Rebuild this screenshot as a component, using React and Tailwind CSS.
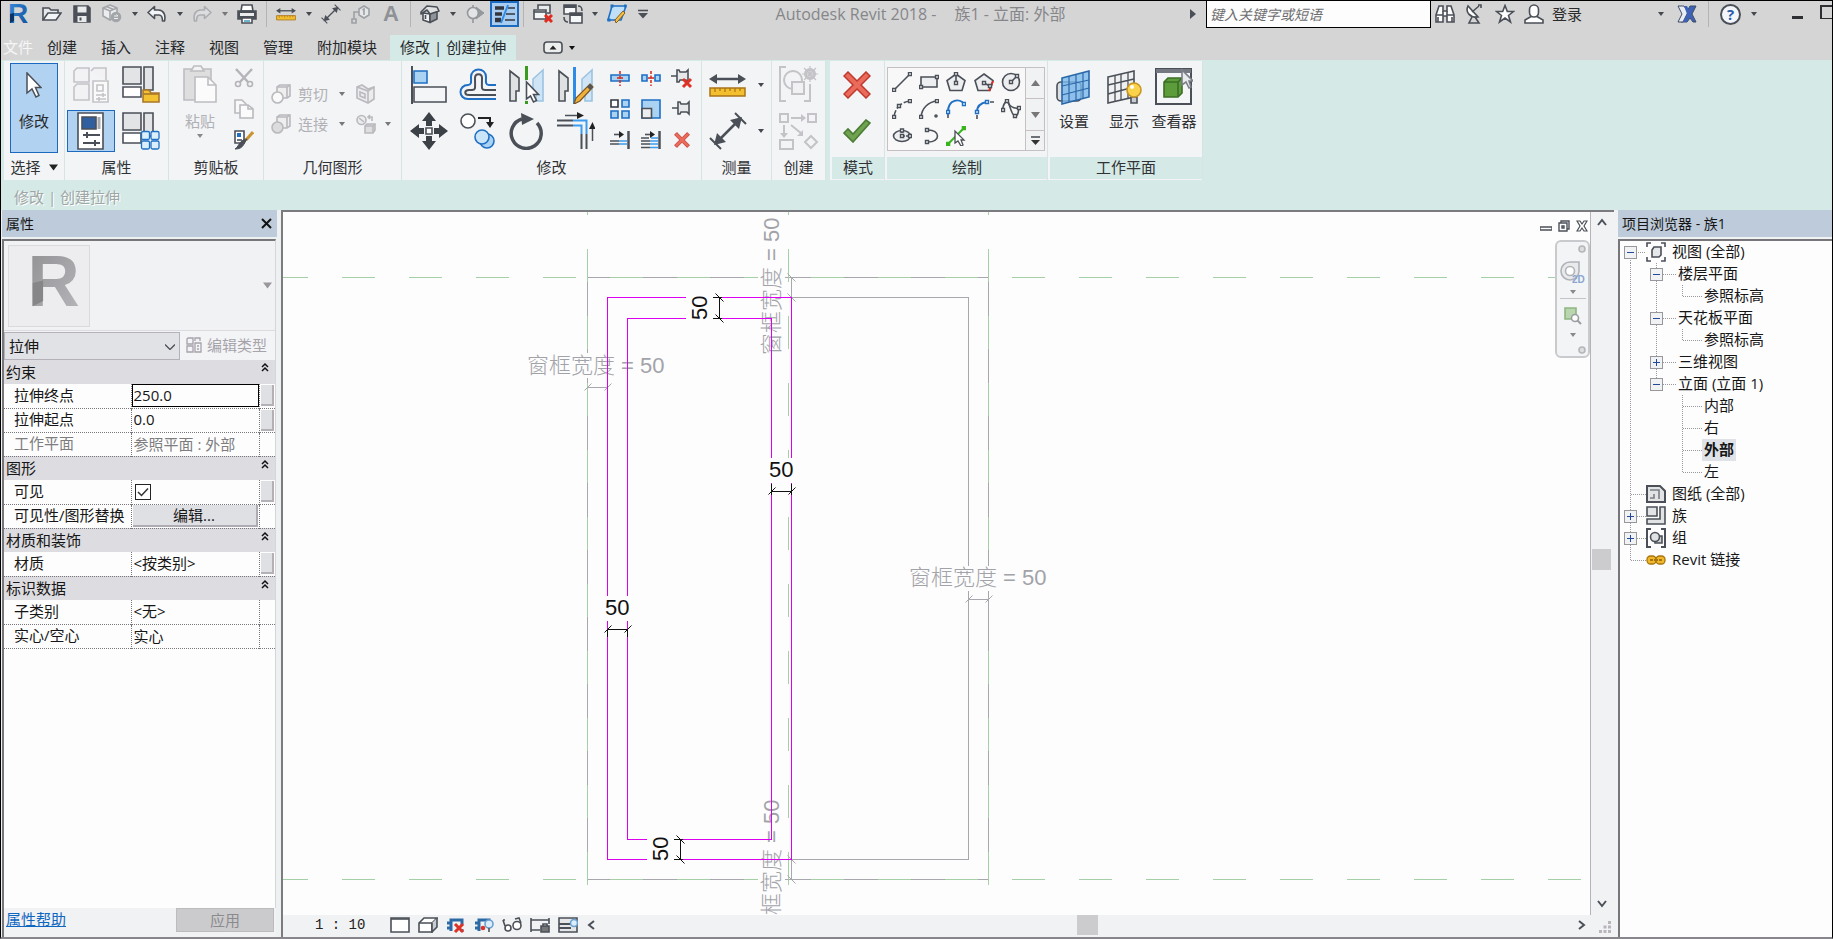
import { useState } from 'react';

const INK = '#4b5058';
const PALE = '#c3c3c8';
const BLUE = '#1f6fc4';
const SKY = '#a9d2f3';

function Svg({ w = 20, h = w, children, ...rest }) {
  return (
    <svg width={w} height={h} viewBox={`0 0 ${w} ${h}`} fill="none" stroke={INK} strokeWidth="1.6" className="block shrink-0" aria-hidden="true" {...rest}>
      {children}
    </svg>
  );
}

function Caret({ color = '#44484f', size = 6, className = '' }) {
  return (
    <svg width={size} height={size} viewBox="0 0 6 6" className={`block shrink-0 ${className}`} aria-hidden="true">
      <path d="M0 1h6L3 5z" fill={color} />
    </svg>
  );
}

function CaretButton({ label, className = 'w-[15px]', color }) {
  return (
    <button type="button" aria-label={label} className={`flex h-6 items-center justify-center ${className}`}>
      <Caret color={color} />
    </button>
  );
}

/* ---------- quick access icons ---------- */

const OpenIcon = () => (
  <Svg w={20} h={16}>
    <path d="M1 14V2h6l2 2h7v3" fill="#e6e8ea" />
    <path d="M1 14 6 7h13l-5 7z" fill="#f4f5f6" />
  </Svg>
);
const SaveIcon = () => (
  <Svg w={18}>
    <path d="M1 1h14l2 2v14H1z" fill={INK} />
    <path d="M4.500 1.500h9v6h-9z" fill="#e8eaec" stroke="none" />
    <path d="M4.500 11h9v6h-9z" fill="#e8eaec" stroke="none" />
    <path d="M6.500 12.500h2v3h-2z" fill={INK} stroke="none" />
  </Svg>
);
const SyncIcon = () => (
  <Svg w={20} stroke="#a2a5a9">
    <path d="M8 1l7 3v8l-7 4-7-4V4z" fill="#ececee" />
    <path d="M1 4l7 3 7-3M8 7v9M4.500 2.500l7 3" />
    <circle cx="14" cy="13" r="4.500" fill="#a2a5a9" />
    <path d="M12 12h4l-1.500-1.500M16 14.500h-4" stroke="#eee" strokeWidth="1" />
  </Svg>
);
const UndoIcon = () => (
  <Svg w={20} h={18} strokeLinejoin="round">
    <path d="M7.500 1.500 1 7.500l6.500 6V10h4.500c2 0 3.500 1.500 3.500 6h2c1.500-6-1-11-6-11H7.500z" fill="#f4f5f6" />
  </Svg>
);
const RedoIcon = () => (
  <Svg w={20} h={18} strokeLinejoin="round" stroke="#aaadb1">
    <path d="M12.500 1.500 19 7.500l-6.500 6V10H8c-2 0-3.500 1.500-3.500 6h-2c-1.500-6 1-11 6-11h4z" fill="#dcddde" />
  </Svg>
);
const PrintIcon = () => (
  <Svg w={20}>
    <path d="M5 1h10l1 6H4z" fill="#fff" />
    <path d="M1 7h18v8H1z" fill={INK} />
    <path d="M3 9h14v3H3z" fill="#e9ebed" stroke="none" />
    <path d="M5 14h10v5H5z" fill="#fff" />
    <path d="M7 17h6" stroke="#4aa3c7" />
  </Svg>
);
const MeasureIcon = ({ w = 20, h = 14 }) => (
  <svg width={w} height={h} viewBox="0 0 37 26" className="block shrink-0" aria-hidden="true">
    <path d="M4 7h29" stroke={INK} strokeWidth="2.500" />
    <path d="M0 7l8-5v10zM37 7l-8-5v10z" fill={INK} />
    <path d="M1 16h35v8H1z" fill="#f3bf2f" stroke="#a8741a" strokeWidth="1.500" />
    <path d="M6 16v4M11 16v3M16 16v4M21 16v3M26 16v4M31 16v3" stroke="#a8741a" strokeWidth="1.200" />
  </svg>
);
const AlignedDimIcon = ({ w = 20 }) => (
  <svg width={w} height={w} viewBox="0 0 38 38" fill="none" stroke={INK} strokeWidth="2" className="block shrink-0" aria-hidden="true">
    <path d="M8 30 30 8" strokeWidth="2.500" />
    <path d="M5 33l3-12 9 9zM33 5l-12 3 9 9z" fill={INK} stroke="none" />
    <path d="M1 26l11 11M26 1l11 11" />
  </svg>
);
const TagIcon = () => (
  <Svg w={20} stroke="#9da0a4">
    <path d="M13 2l5 3v6l-5 3-5-3V5z" fill="#e6e7e8" />
    <path d="M8 8H3v7M1 15h4v4H1z" />
    <path d="M13 11V5l-1.500 1" />
  </Svg>
);
const HouseIcon = () => (
  <Svg w={20} strokeLinejoin="round">
    <path d="M3 9v7l7 2.500V10z" fill="#f3f4f5" />
    <path d="M10 18.500l7-3.500V7l-7 3z" fill="#8f949a" />
    <path d="M1 8l6-6 10 1 2 4-9 3-3-4-6 4z" fill="#dfe1e3" />
    <path d="M5.500 11v4" />
  </Svg>
);
const SectionIcon = () => (
  <Svg w={20} stroke="#94979b">
    <circle cx="8" cy="9" r="5.500" fill="#e3e4e5" />
    <path d="M11 3l8 6-8 6c3-4 3-8 0-12z" fill="#94979b" strokeWidth="1" />
    <path d="M8 14v5M8 1v3" />
  </Svg>
);
const ThinLinesIcon = () => (
  <Svg w={22} h={20} stroke="#33373d">
    <path d="M1 4h9M1 10h7" strokeWidth="3.500" />
    <path d="M1 16h6" strokeWidth="4.500" />
    <path d="M14 4h7M12 10h9M11 16h10" strokeWidth="1.500" />
    <path d="M14 1 7 19" stroke="#2e8be6" strokeWidth="2" />
  </Svg>
);
const CloseWindowsIcon = () => (
  <Svg w={20}>
    <path d="M5 5V1h12v8h-3" fill="#e9eaec" />
    <path d="M1 6h12v9H1z" fill="#f6f7f8" />
    <path d="M1 8h12" />
    <path d="M12 11l7 7M19 11l-7 7" stroke="#e02b20" strokeWidth="3" />
  </Svg>
);
const SwitchWindowsIcon = () => (
  <Svg w={20}>
    <path d="M1 1h12v9H1z" fill="#f6f7f8" />
    <path d="M1 2.500h12" strokeWidth="3" />
    <path d="M7 9h12v10H7z" fill="#f6f7f8" />
    <path d="M7 10.500h12" strokeWidth="3" />
    <path d="M15 2c3 0 4 1 4 5M1 13c0 3 1 5 4 5" />
  </Svg>
);
const SketchIcon = () => (
  <Svg w={20}>
    <path d="M5 2h14l-5 14H1z" fill="#bfe0f8" stroke={BLUE} />
    <path d="M18 9l-7 8-2 2-1-3 8-9z" fill="#f6c244" stroke="#8a5b1a" strokeWidth="1" />
    <path d="M3.500.5h3v3h-3zM17 .5h2.500v3H17zM.5 14.500h3v3h-3z" fill={BLUE} stroke="none" />
  </Svg>
);
const BinocularsIcon = () => (
  <Svg w={20}>
    <path d="M4 2h4v5h4V2h4l3 9v7h-7v-6H8v6H1v-7z" fill="#fff" />
    <path d="M1 11h7v-4M19 11h-7V7M3 18v-5M17 18v-5" />
  </Svg>
);
const SatelliteIcon = () => (
  <Svg w={18} h={20}>
    <path d="M3 2c-3 6 2 12 10 11z" fill="#fff" />
    <path d="M7 8l7-6M13 1h3v3M7 13l-3 6h10l-4-6" />
  </Svg>
);
const StarIcon = () => (
  <Svg w={20}>
    <path d="M10 1.500l2.300 6h6.200l-5 4 2 6.500L10 14l-5.500 4 2-6.500-5-4h6.200z" fill="#fff" />
  </Svg>
);
const UserIcon = () => (
  <Svg w={20}>
    <path d="M8 12l-7 4v3h18v-3l-7-4" fill="#fff" />
    <rect x="5.500" y="1" width="9" height="12" rx="4.500" fill="#fff" />
  </Svg>
);
const ExchangeIcon = () => (
  <Svg w={20} h={18} stroke="#3d4c66" strokeWidth="1">
    <path d="M19 1h-6L4 17h6l3-4 3 4h3l-4-8z" fill="#3e62b5" />
    <path d="M1 1h6l4 6-2 4-3 6H1l4-8z" fill="#e8ecf4" />
    <path d="M7 1h3l4 8-4 8H6l4-8z" fill="#3e62b5" stroke="none" />
  </Svg>
);

function RevitLogo({ size, from, to, fold }) {
  const id = `logo-${size}`;
  return (
    <svg width={size} height={size} viewBox="0 0 24 24" overflow="visible" className="block shrink-0" role="img" aria-label="Revit">
      <defs>
        <linearGradient id={id} x1="0" y1="0" x2="1" y2="1">
          <stop offset="0" stopColor={from} />
          <stop offset="1" stopColor={to} />
        </linearGradient>
      </defs>
      <text x="1" y="21" fontSize="28" fontWeight="700" fontFamily="Liberation Sans, sans-serif" fill={`url(#${id})`}>R</text>
      <path d="M3 12l4-1v8l-4 2z" fill={fold} />
    </svg>
  );
}

/* ---------- ribbon icons ---------- */

const CursorIcon = ({ w = 16, h = 26 }) => (
  <svg width={w} height={h} viewBox="0 0 16 26" className="block shrink-0" aria-hidden="true">
    <path d="M1 1v20l5-4 4 8 3-1.500-3.500-8H15z" fill="#fff" stroke={INK} strokeWidth="1.500" />
  </svg>
);
const TypePropsIcon = () => (
  <Svg w={38} stroke={PALE}>
    <path d="M2 5l3-3h12v14H2zM19 5l3-3h12v12M2 21l3-3h12v16H2z" fill="#f2f2f4" />
    <path d="M21 15h15v21H21z" fill="#fafafa" />
    <path d="M25 19h6v6h-6zM24 29h10M24 33h10M31 27v4M27 31v4" />
  </Svg>
);
const FamilyShapes = () => (
  <>
    <path d="M1 1h18v17H1zM22 1h9v23h-9z" fill="#e2e4e6" />
    <path d="M1 21h18v10H1z" fill="#fff" />
  </>
);
const FamilyFolderIcon = () => (
  <Svg w={38}>
    <FamilyShapes />
    <path d="M21 36V24h6l2 3h8v9z" fill="#f2c230" stroke="#a9772a" />
    <path d="M21 28h16" stroke="#a9772a" />
  </Svg>
);
const FamilyTypesIcon = () => (
  <Svg w={38}>
    <FamilyShapes />
    <g fill="#dbeefb" stroke={BLUE} strokeWidth="1.300">
      <rect x="19.500" y="19.500" width="8" height="8" rx="1.500" />
      <rect x="29" y="19.500" width="8" height="8" rx="1.500" />
      <rect x="19.500" y="29" width="8" height="8" rx="1.500" />
      <rect x="29" y="29" width="8" height="8" rx="1.500" />
    </g>
  </Svg>
);
const PropertiesIcon = () => (
  <Svg w={28} h={38}>
    <path d="M1 1h25v36H1z" fill="#fff" />
    <path d="M5 5h14v12H5z" fill="#2f5f9e" />
    <path d="M22 5v12" stroke="#a8acb1" strokeWidth="3" />
    <path d="M6 23h17M6 31h17M10 20v6M18 28v6" strokeWidth="2" />
  </Svg>
);
const PasteIcon = () => (
  <Svg w={34} h={38} stroke="#bdbdc2">
    <path d="M1 4h27v31H1z" fill="#dededf" />
    <path d="M8 6l3-5h7l3 5z" fill="#f3f3f3" />
    <path d="M12 12h13l8 8v17H12z" fill="#fbfbfb" />
    <path d="M25 12v8h8" />
  </Svg>
);
const CutIcon = () => (
  <Svg w={20} stroke="#b4b4b9">
    <path d="M2 1l12 13M18 1 6 14" strokeWidth="2.500" />
    <circle cx="4" cy="16" r="2.500" />
    <circle cx="16" cy="16" r="2.500" />
  </Svg>
);
const CopyPagesIcon = () => (
  <Svg w={20} stroke="#b9b9be">
    <path d="M1 1h7l4 4v9H1z" fill="#f8f8f8" />
    <path d="M6 6h8l5 4v9H6z" fill="#fbfbfb" />
    <path d="M14 6v4h5" />
  </Svg>
);
const MatchIcon = () => (
  <Svg w={20}>
    <path d="M1 1h9v12H1z" fill="#fff" />
    <path d="M3 3h4v4H3z" fill={BLUE} stroke="none" />
    <path d="M3 10h5" />
    <path d="M19 2l-7 8" stroke="#c99431" strokeWidth="3" />
    <path d="M13 9l-3 5c-2 4-5 5-9 5 3-2 3-4 5-6 2-3 5-4 7-4z" fill={INK} strokeWidth="1" />
  </Svg>
);
const CutGeomIcon = ({ solid }) => (
  <Svg w={20} stroke="#b9b9be">
    <path d="M6 3l3-2h10v11l-3 2H6z" fill="#eeeeef" />
    <path d="M6 3h10v11M16 3l3-2" />
    <circle cx="6.500" cy="13.500" r="5.500" fill={solid ? '#dcdcdf' : '#fafafa'} />
  </Svg>
);
const WallIcon = () => (
  <Svg w={20} stroke="#b9b9be">
    <path d="M1 3l5-2 6 4 6-2v12l-6 4-11-5z" fill="#ececee" />
    <path d="M1 3l11 4 6-4M12 7v12M4 8l5 2v4l-5-2z" />
  </Svg>
);
const PaintIcon = () => (
  <Svg w={20} stroke="#b9b9be">
    <circle cx="5.500" cy="6" r="4.500" fill="#ececee" />
    <path d="M3 4l5 4" />
    <path d="M12 3h4v4M14 1l-2 2 2 2" />
    <path d="M9 12l2-2h8v6l-2 3H9z" fill="#dededf" />
    <path d="M9 12h8v7M17 12l2-2" />
  </Svg>
);
const AlignIcon = () => (
  <Svg w={38}>
    <path d="M2 0v38" strokeWidth="2" />
    <path d="M4 5h13v12H4z" fill={SKY} stroke={BLUE} />
    <path d="M4 21h32v15H4z" fill="#f4f5f6" />
  </Svg>
);
const OffsetIcon = () => (
  <Svg w={38} h={34} strokeWidth="2">
    <path d="M37 17h-7c-4 0-3-4-3-8C27-1 12-1 12 9c0 4 1 8-3 8-10 0-10 14 0 14h28" stroke={BLUE} />
    <path d="M37 22H26c-4 0-3-2-3-12 0-5-7-5-7 0 0 10 1 12-3 12h-3c-5 0-5 5 0 5h27" />
  </Svg>
);
const MirrorIcon = ({ draw }) => (
  <Svg w={38}>
    <path d="M2 5l9 7v13H8v10H2z" fill="#dfe1e3" />
    <path d="M35 4l-10 9v12l3 1v9h7z" fill="#cfe4f5" stroke="#9cc3e2" />
    {draw ? (
      <>
        <path d="M17.500 1v37" stroke="#2e8be6" strokeWidth="3" />
        <path d="M33 18l3 3-13 14-6 3 2-6z" fill="#f0b13c" stroke="#7a5522" strokeWidth="1.200" />
        <path d="M33 18l3 3-3 3-3-3z" fill="#555" stroke="none" />
      </>
    ) : (
      <>
        <path d="M18.500 0v14M18.500 35v3" stroke="#3b9a20" strokeWidth="3" />
        <path d="M18.500 16v17l4-3 3 6 3-1.500-3-6h5z" fill="#fff" />
      </>
    )}
  </Svg>
);
const MoveIcon = () => (
  <Svg w={38}>
    <path d="M19 0l7 9h-4v5h-6V9h-4zM19 38l7-9h-4v-5h-6v5h-4zM0 19l9-7v4h5v6H9v4zM38 19l-9-7v4h-5v6h5v4z" fill="#3c4047" stroke="none" />
    <path d="M16 16h6v6h-6z" fill="#fff" />
  </Svg>
);
const CopyIcon = () => (
  <Svg w={36}>
    <circle cx="8" cy="8" r="7" fill="#fff" />
    <path d="M18 5h12v6" stroke="#222" strokeWidth="2" />
    <path d="M26 9h8l-4 6z" fill="#222" stroke="none" />
    <circle cx="27" cy="28" r="7" fill={SKY} stroke={BLUE} />
    <circle cx="22" cy="24" r="7" fill="#cbe5f8" stroke={BLUE} />
  </Svg>
);
const RotateIcon = () => (
  <Svg w={36} h={38}>
    <path d="M28 11a15 15 0 1 1-15-4" strokeWidth="3.500" />
    <path d="M12 1l13 6-12 6z" fill={INK} stroke="none" />
  </Svg>
);
const TrimIcon = () => (
  <Svg w={38}>
    <path d="M0 8.500h16M0 13.500h16" strokeWidth="2" />
    <path d="M16 8.500h13.500V22M16 13.500h8.500V22" stroke="#3b9bf0" strokeWidth="2" />
    <path d="M29.500 22v15M24.500 22v15" strokeWidth="2" />
    <path d="M8 3.500h14M35.500 29V15" strokeWidth="1.500" />
    <path d="M20 0l7 3.500L20 7zM32 17l3.500-7 3 7z" fill="#222" stroke="none" />
  </Svg>
);
const SplitIcon = ({ gap }) => (
  <Svg w={20} stroke={BLUE}>
    {gap ? <path d="M1 7h5v6H1zM14 7h5v6h-5z" fill={SKY} /> : <path d="M1 7h18v6H1z" fill={SKY} />}
    <path d="M10 3v15" stroke="#d63024" strokeDasharray="3 1.500" />
    <path d="M7 10h6" stroke="#d63024" />
  </Svg>
);
const PinShape = () => <path d="M0 9h6M6 3h2l1 2h6l2-2v12l-2-2H9l-1 2H6z" fill="#e7e8ea" />;
const UnpinIcon = () => (
  <Svg w={22}>
    <PinShape />
    <path d="M12 12l8 8M20 12l-8 8" stroke="#dd3327" strokeWidth="3" />
  </Svg>
);
const PinIcon = () => (
  <Svg w={20}>
    <PinShape />
  </Svg>
);
const ArrayIcon = () => (
  <Svg w={20} stroke={BLUE}>
    <path d="M12 1h7v7h-7zM1 12h7v7H1zM12 12h7v7h-7z" fill={SKY} />
    <path d="M1 1h7v7H1z" fill="#fff" stroke="#33373d" />
  </Svg>
);
const ScaleIcon = () => (
  <Svg w={20}>
    <path d="M1 1h18v18H1z" fill={SKY} stroke={BLUE} />
    <path d="M1 9.500h9.500V19H1z" fill="#eceef0" />
  </Svg>
);
const TrimOneIcon = ({ multi }) => (
  <Svg w={20}>
    <path d="M18.500 1v18" strokeWidth="2.500" />
    <path d="M4 4.500h6" />
    <path d="M9 1l5 3.500L9 8z" fill="#222" stroke="none" />
    <path d="M0 11h9M0 14h9" />
    <path d="M9 11h8M9 14h8" stroke="#3b9bf0" />
    {multi && (
      <>
        <path d="M0 8h8M0 17.500h9" />
        <path d="M10 8h7M9 17.500h8" stroke="#3b9bf0" />
      </>
    )}
  </Svg>
);
const DeleteIcon = ({ w = 18 }) => (
  <svg width={w} height={w} viewBox="0 0 28 28" className="block shrink-0" aria-hidden="true">
    <path d="M5 1l9 9 9-9 4 4-9 9 9 9-4 4-9-9-9 9-4-4 9-9-9-9z" fill="#ea6a5c" stroke="#c0392d" strokeWidth="1.500" />
  </svg>
);
const CheckIcon = () => (
  <Svg w={28} h={24}>
    <path d="M1 14l4-4 5 5L23 1l4 3-17 19z" fill="#6fa352" stroke="#4b7c33" />
  </Svg>
);
const CreateGroupIcon = () => (
  <Svg w={42} h={38} stroke={PALE} strokeWidth="2">
    <path d="M8 1H2v34h6M32 18v17h-6" />
    <circle cx="15" cy="14" r="9" />
    <path d="M14 16h12v12H14z" fill="#f1f1f3" />
    <circle cx="32" cy="8" r="4.500" fill="#e4e4e6" strokeWidth="3" />
    <path d="M32 0v16M24 8h16M26 2l12 12M38 2 26 14" strokeWidth="1.200" />
  </Svg>
);
const CreateSimilarIcon = () => (
  <Svg w={40} stroke={PALE} strokeWidth="2">
    <path d="M1 3h8v8H1zM29 3h8v8h-8zM1 29h13v9H1z" />
    <path d="M32 25l6 6-6 6-6-6z" />
    <path d="M12 7h11M5 14v10M12 14l11 9" />
    <path d="M22 3l5 4-5 4zM1 22h8l-4 5zM24 19v6h-6z" fill={PALE} stroke="none" />
  </Svg>
);

const Dot = ({ x, y, c = INK }) => <path d={`M${x - 1.500} ${y - 1.500}h3v3h-3z`} fill="#fff" stroke={c} strokeWidth="1.400" />;

const drawTools = [
  { name: '线', icon: <><path d="M2 18 18 2" /><Dot x={2} y={18} /><Dot x={18} y={2} /></> },
  { name: '矩形', icon: <><path d="M2 5h16v10H2z" fill="#eceef0" /><Dot x={2} y={15} /><Dot x={18} y={5} /></> },
  { name: '内接多边形', icon: <><path d="M10 2l9 6.500-3 10H4l-3-10z" fill="#eceef0" /><path d="M10 11V3" /><Dot x={10} y={11} /><Dot x={10} y={2} /></> },
  { name: '外接多边形', icon: <><path d="M10 2l9 6.500-3 10H4l-3-10z" fill="#eceef0" /><path d="M19 9l-4 10" stroke="#e02b20" strokeWidth="2" strokeDasharray="5 1" /><path d="M10 11l6 3" /><Dot x={10} y={11} /><Dot x={16} y={14} /></> },
  { name: '圆形', icon: <><circle cx="10" cy="10" r="8.500" fill="#eceef0" /><path d="M10 10l6-6" /><Dot x={10} y={10} /><Dot x={16} y={4} /></> },
  { name: '起点-终点-半径弧', icon: <><path d="M2 18C3 9 9 3 18 2" strokeDasharray="7 2" /><Dot x={2} y={18} /><Dot x={7} y={7} /><Dot x={18} y={2} /></> },
  { name: '圆心-端点弧', icon: <><path d="M2 18C3 9 9 3 18 2" /><Dot x={2} y={18} /><Dot x={18} y={2} /><circle cx="17" cy="17" r="1" fill={INK} /></> },
  { name: '相切-端点弧', icon: <><path d="M2 13C2 0 14-1 18 5" stroke={BLUE} strokeWidth="2" /><path d="M2 15v4" /><Dot x={2} y={13} c={BLUE} /><Dot x={18} y={5} c={BLUE} /></> },
  { name: '圆角弧', icon: <><path d="M3 13C3 7 6 4 13 3" stroke={BLUE} strokeWidth="2" /><path d="M3 16v4M16 3h4" /><Dot x={3} y={13} c={BLUE} /><Dot x={13} y={3} c={BLUE} /></> },
  { name: '样条曲线', icon: <><path d="M1.500 11C2 7 4 3 6 2s4 15 8 15 3-5 4-8" /><path d="M6 2c3 6 7 8 12 7" /><Dot x={2} y={11} /><Dot x={6} y={2} /><Dot x={14} y={17} /><Dot x={18} y={9} /></> },
  { name: '椭圆', icon: <><ellipse cx="10" cy="10" rx="8.500" ry="5.500" fill="#eceef0" /><path d="M10 5v5h8" strokeDasharray="2 1" /><Dot x={10} y={10} /><Dot x={10} y={4.500} /><Dot x={18} y={10} /></> },
  { name: '半椭圆', icon: <><path d="M8 4c14-1 14 13 0 12" /><Dot x={8} y={4} /><Dot x={8} y={16} /></> },
  { name: '拾取线', icon: <><path d="M2 18 18 2" stroke="#39b41e" strokeWidth="2" /><path d="M.5 16.500h3v3h-3zM16.500.5h3v3h-3z" fill="#39b41e" stroke="#39b41e" /><path d="M9 5v12l3-2 3 5 2-1-2-5h3z" fill="#fff" strokeWidth="1.300" /></> },
];

const SetPlaneIcon = () => (
  <Svg w={36}>
    <rect x="1" y="13" width="24" height="19" rx="4" fill="#dcdfe3" />
    <path d="M6 9l27-7v26L6 35z" fill="#7ab8ec" fillOpacity=".8" stroke="#2a68a8" />
    <path d="M13 7v26M20 5v26M27 4v26M6 17l27-6M6 26l27-7" stroke="#2a68a8" strokeWidth="1.200" />
  </Svg>
);
const ShowPlaneIcon = () => (
  <Svg w={36}>
    <path d="M2 8l26-6v26L2 34z" fill="#eff0f2" />
    <path d="M9 6v26M15 5v26M22 3v26M2 16l26-6M2 25l26-7" strokeWidth="1.300" />
    <path d="M25 28h6v6h-6z" fill="#c9ccd0" />
    <circle cx="28" cy="21" r="7" fill="#fbd34b" stroke="#c89522" />
    <circle cx="26" cy="18" r="2" fill="#fff" stroke="none" />
  </Svg>
);
const ViewerIcon = () => (
  <Svg w={38}>
    <path d="M1 1h35v35H1z" fill="#f4f5f6" strokeWidth="2" />
    <path d="M1 3h35" stroke="#757a82" strokeWidth="4" />
    <path d="M9 14l4-4h14v15l-4 4H9z" fill="#5c9c3a" stroke="#3c6e26" />
    <path d="M9 14h14v15M23 14l4-4" stroke="#3c6e26" />
    <path d="M27 2v15l4-3 3 6 2-1-2-6h4z" fill="#e9eaec" stroke="#7b8087" />
  </Svg>
);

/* ---------- title bar ---------- */

const IconBtn = ({ label, className = 'w-[30px]', children }) => (
  <button type="button" aria-label={label} className={`flex h-full shrink-0 items-center justify-center ${className}`}>
    {children}
  </button>
);
const Sep = () => <span className="mx-1 h-[26px] w-px shrink-0 bg-[#b4b4b4]" />;

function TitleBar() {
  return (
    <header className="flex h-[26px] items-center">
      <div className="flex w-[36px] shrink-0 justify-center">
        <RevitLogo size={24} from="#3b8fe0" to="#0f4d96" fold="#083468" />
      </div>
      <IconBtn label="打开"><OpenIcon /></IconBtn>
      <IconBtn label="保存"><SaveIcon /></IconBtn>
      <IconBtn label="同步"><SyncIcon /></IconBtn>
      <CaretButton label="同步选项" />
      <IconBtn label="放弃"><UndoIcon /></IconBtn>
      <CaretButton label="放弃列表" />
      <IconBtn label="重做"><RedoIcon /></IconBtn>
      <CaretButton label="重做列表" color="#777" />
      <IconBtn label="打印"><PrintIcon /></IconBtn>
      <Sep />
      <IconBtn label="测量"><MeasureIcon /></IconBtn>
      <CaretButton label="测量选项" />
      <IconBtn label="对齐尺寸标注"><AlignedDimIcon /></IconBtn>
      <IconBtn label="按类别标记"><TagIcon /></IconBtn>
      <button type="button" className="flex w-[30px] shrink-0 items-center justify-center font-['Liberation_Sans',sans-serif] text-[22px] font-bold leading-[26px] text-[#8e9195]">A</button>
      <Sep />
      <IconBtn label="默认三维视图"><HouseIcon /></IconBtn>
      <CaretButton label="三维视图选项" />
      <IconBtn label="剖面"><SectionIcon /></IconBtn>
      <button type="button" aria-label="细线" className="flex h-[26px] w-[29px] shrink-0 items-center justify-center border-2 border-[#1b6ac0] bg-[#a9cdf0]">
        <ThinLinesIcon />
      </button>
      <Sep />
      <IconBtn label="关闭隐藏窗口"><CloseWindowsIcon /></IconBtn>
      <IconBtn label="切换窗口"><SwitchWindowsIcon /></IconBtn>
      <CaretButton label="窗口列表" className="w-[13px]" />
      <IconBtn label="草图" className="w-[32px]"><SketchIcon /></IconBtn>
      <IconBtn label="自定义" className="w-[20px]">
        <Svg w={10}><path d="M0 1.500h10" /><path d="M0 4h10L5 9.500z" fill={INK} stroke="none" /></Svg>
      </IconBtn>

      <h1 className="flex flex-1 justify-center gap-[18px] whitespace-nowrap pl-2 text-[16px] leading-[24px] text-[#85868a]">
        <span>Autodesk Revit 2018 -</span>
        <span>族1 - 立面: 外部</span>
      </h1>

      <IconBtn label="展开搜索" className="w-[26px]">
        <Svg w={6} h={10}><path d="M0 0v10l6-5z" fill={INK} stroke="none" /></Svg>
      </IconBtn>
      <input aria-label="搜索" placeholder="键入关键字或短语" className="h-[28px] w-[225px] shrink-0 border border-black bg-[#fdfdfd] px-[3px] text-[14px] italic leading-[20px] outline-none placeholder:text-[#6d6d70]" />
      <IconBtn label="查找" className="w-[28px]"><BinocularsIcon /></IconBtn>
      <IconBtn label="通讯中心"><SatelliteIcon /></IconBtn>
      <IconBtn label="收藏夹" className="w-[32px]"><StarIcon /></IconBtn>
      <button type="button" className="flex w-[143px] shrink-0 items-center gap-[8px] pl-[3px] text-[15px] leading-[24px] text-[#2b2b2b]">
        <UserIcon />
        登录
        <Caret className="ml-auto" />
      </button>
      <IconBtn label="应用程序交换" className="ml-1.5 w-[34px]"><ExchangeIcon /></IconBtn>
      <Sep />
      <button type="button" className="ml-[7px] flex h-[21px] w-[21px] shrink-0 items-center justify-center rounded-full border-2 border-[#4b5058] bg-[#f2f6fb] text-[15px] font-bold leading-[16px] text-[#2a5aa8]">?</button>
      <CaretButton label="帮助选项" className="ml-1 w-[18px]" />
      <IconBtn label="最小化" className="ml-5 w-[28px]">
        <span className="mt-1.5 h-[3px] w-[11px] bg-[#2d2f33]" />
      </IconBtn>
      <IconBtn label="还原" className="ml-[9px] w-[12px]">
        <span className="-mt-1 h-[14px] w-full border-2 border-b border-r-0 border-[#2d2f33]" />
      </IconBtn>
    </header>
  );
}

const tabs = ['创建', '插入', '注释', '视图', '管理', '附加模块'];

function Tabs() {
  return (
    <nav className="flex h-[33px] items-end pl-[2px] text-[15px] leading-[25px] text-[#26282b]">
      <button type="button" className="mr-[14px] shrink-0 text-[#f6f6f6]">文件</button>
      <div className="mr-[13px] flex shrink-0 gap-[24px]">
        {tabs.map((t) => (
          <button type="button" key={t}>{t}</button>
        ))}
      </div>
      <a href="#modify" className="shrink-0 bg-[#d5eae7] px-[10px]">修改 | 创建拉伸</a>
      <div className="ml-[27px] flex h-[25px] items-center gap-1.5">
        <Svg w={20} h={13}>
          <rect x="1" y="1" width="18" height="11" rx="3" fill="#eceded" />
          <path d="M6.500 8.500h7L10 4.500z" fill="#222" stroke="none" />
        </Svg>
        <Caret color="#111" />
      </div>
    </nav>
  );
}

/* ---------- ribbon ---------- */

function Panel({ title, className, mint, arrow, children }) {
  return (
    <section className={`flex shrink-0 flex-col border-r border-[#d8e4e4] bg-[#f3f4f5] ${className}`}>
      <div className="flex h-[96px]">{children}</div>
      <h2 className={`flex h-[22px] items-center justify-center gap-2 pb-px text-[15px] leading-[21px] text-[#303236] ${mint ? 'border-l-2 border-[#f3f4f5] bg-[#d5eae7]' : ''}`}>
        {title}
        {arrow && <Caret size={9} color="#222" />}
      </h2>
    </section>
  );
}

const Cell = ({ label, children }) => (
  <button type="button" aria-label={label} className="flex items-center justify-center">{children}</button>
);

function GeometryRow({ label, icon, extra, more }) {
  return (
    <div className="flex h-[30px] items-center">
      <button type="button" className="flex items-center gap-[7px] text-[15px] leading-[24px] text-[#b0b0b5]">{icon}{label}</button>
      <CaretButton label={`${label}选项`} className="w-[28px]" color="#77777c" />
      <Cell label="几何图形工具">{extra}</Cell>
      {more && <CaretButton label="更多" className="w-[24px]" color="#77777c" />}
    </div>
  );
}

function PlaneTool({ label, children }) {
  return (
    <button type="button" className="flex w-[50px] flex-col items-center gap-[2px] whitespace-nowrap text-[15px] leading-[24px] text-[#303236]">
      <span className="flex h-[40px] items-center">{children}</span>
      {label}
    </button>
  );
}

function Ribbon() {
  return (
    <div className="flex h-[120px] bg-[#d5eae7] pl-[3px] pt-px">
      <Panel title="选择" arrow className="w-[61px]">
        <button type="button" className="mx-auto mt-[2px] flex h-[90px] w-[48px] flex-col items-center border border-[#1b6ac0] bg-[#b1d2f0] pt-[8px] text-[15px] leading-[24px] text-[#26282b]">
          <CursorIcon />
          <span className="mt-[11px]">修改</span>
        </button>
      </Panel>

      <Panel title="属性" className="w-[104px]">
        <div className="ml-px mt-px grid grid-cols-[50px_49px] grid-rows-[46px_46px]">
          <Cell label="类型属性"><TypePropsIcon /></Cell>
          <Cell label="族类别"><FamilyFolderIcon /></Cell>
          <button type="button" aria-label="属性" className="flex h-[42px] w-[48px] items-center justify-center place-self-center border border-[#1b6ac0] bg-[#b1d2f0]"><PropertiesIcon /></button>
          <Cell label="族类型"><FamilyTypesIcon /></Cell>
        </div>
      </Panel>

      <Panel title="剪贴板" className="w-[95px]">
        <button type="button" className="ml-[3px] flex w-[56px] flex-col items-center pt-[4px] text-[15px] leading-[24px] text-[#b0b0b5]">
          <PasteIcon />
          <span className="mt-[6px]">粘贴</span>
          <Caret color="#88888d" />
        </button>
        <div className="mt-px grid w-[32px] grid-rows-[31px_31px_31px]">
          <Cell label="剪切"><CutIcon /></Cell>
          <Cell label="复制"><CopyPagesIcon /></Cell>
          <Cell label="匹配类型属性"><MatchIcon /></Cell>
        </div>
      </Panel>

      <Panel title="几何图形" className="w-[138px]">
        <div className="pl-[7px] pt-[18px]">
          <GeometryRow label="剪切" icon={<CutGeomIcon />} extra={<WallIcon />} />
          <GeometryRow label="连接" icon={<CutGeomIcon solid />} extra={<PaintIcon />} more />
        </div>
      </Panel>

      <Panel title="修改" className="w-[300px]">
        <div className="ml-[2px] mt-px grid grid-cols-[49px_49px_49px_49px] grid-rows-[46px_46px]">
          <Cell label="对齐"><AlignIcon /></Cell>
          <Cell label="偏移"><OffsetIcon /></Cell>
          <Cell label="镜像 - 拾取轴"><MirrorIcon /></Cell>
          <Cell label="镜像 - 绘制轴"><MirrorIcon draw /></Cell>
          <Cell label="移动"><MoveIcon /></Cell>
          <Cell label="复制"><CopyIcon /></Cell>
          <Cell label="旋转"><RotateIcon /></Cell>
          <Cell label="修剪/延伸为角"><TrimIcon /></Cell>
        </div>
        <div className="ml-[4px] mt-px grid grid-cols-[31px_31px_31px] grid-rows-[31px_31px_31px]">
          <Cell label="拆分图元"><SplitIcon /></Cell>
          <Cell label="用间隙拆分"><SplitIcon gap /></Cell>
          <Cell label="解锁"><UnpinIcon /></Cell>
          <Cell label="阵列"><ArrayIcon /></Cell>
          <Cell label="缩放"><ScaleIcon /></Cell>
          <Cell label="锁定"><PinIcon /></Cell>
          <Cell label="修剪/延伸单个图元"><TrimOneIcon /></Cell>
          <Cell label="修剪/延伸多个图元"><TrimOneIcon multi /></Cell>
          <Cell label="删除"><DeleteIcon w={16} /></Cell>
        </div>
      </Panel>

      <Panel title="测量" className="w-[70px]">
        <div className="mt-px grid grid-cols-[51px_14px] grid-rows-[46px_46px] items-center">
          <Cell label="测量"><MeasureIcon w={37} h={26} /></Cell>
          <CaretButton label="测量选项" />
          <Cell label="尺寸标注"><AlignedDimIcon w={38} /></Cell>
          <CaretButton label="尺寸标注选项" />
        </div>
      </Panel>

      <Panel title="创建" className="w-[54px]">
        <div className="mx-auto mt-px grid grid-rows-[46px_46px]">
          <Cell label="创建组"><CreateGroupIcon /></Cell>
          <Cell label="创建类似实例"><CreateSimilarIcon /></Cell>
        </div>
      </Panel>

      <Panel title="模式" mint className="ml-[4px] w-[55px]">
        <div className="mx-auto mt-px grid grid-rows-[46px_46px]">
          <Cell label="取消编辑模式"><DeleteIcon w={28} /></Cell>
          <Cell label="完成编辑模式"><CheckIcon /></Cell>
        </div>
      </Panel>

      <Panel title="绘制" mint className="w-[163px]">
        <div className="ml-[2px] mt-[6px] flex h-[84px] w-[158px] border border-[#c6c0c4] bg-[#f8f8f9]">
          <div className="grid flex-1 grid-cols-5 grid-rows-3">
            {drawTools.map((t) => (
              <Cell key={t.name} label={t.name}>
                <Svg w={20}>{t.icon}</Svg>
              </Cell>
            ))}
          </div>
          <div className="grid w-[19px] grid-rows-[31px_32px_19px] divide-y divide-[#c6c0c4] border-l border-[#c6c0c4] bg-[#f1f2f3]">
            <Cell label="上一行"><Svg w={9} h={6}><path d="M0 6h9L4.500 0z" fill="#777" stroke="none" /></Svg></Cell>
            <Cell label="下一行"><Svg w={9} h={6}><path d="M0 0h9L4.500 6z" fill="#777" stroke="none" /></Svg></Cell>
            <Cell label="更多工具"><Svg w={9} h={9}><path d="M0 1h9" /><path d="M0 4h9L4.500 9z" fill="#333" stroke="none" /></Svg></Cell>
          </div>
        </div>
      </Panel>

      <Panel title="工作平面" mint className="w-[155px]">
        <div className="ml-px flex pt-[6px]">
          <PlaneTool label="设置"><SetPlaneIcon /></PlaneTool>
          <PlaneTool label="显示"><ShowPlaneIcon /></PlaneTool>
          <PlaneTool label="查看器"><ViewerIcon /></PlaneTool>
        </div>
      </Panel>
    </div>
  );
}

/* ---------- properties palette ---------- */

const groups = [
  {
    name: '约束',
    rows: [
      { label: '拉伸终点', value: '250.0', kind: 'active', more: true },
      { label: '拉伸起点', value: '0.0', more: true },
      { label: '工作平面', value: '参照平面 : 外部', kind: 'readonly' },
    ],
  },
  {
    name: '图形',
    rows: [
      { label: '可见', kind: 'check', more: true },
      { label: '可见性/图形替换', value: '编辑...', kind: 'button' },
    ],
  },
  { name: '材质和装饰', rows: [{ label: '材质', value: '<按类别>', more: true }] },
  {
    name: '标识数据',
    rows: [
      { label: '子类别', value: '<无>' },
      { label: '实心/空心', value: '实心' },
    ],
  },
];

function PropValue({ id, row }) {
  const [checked, setChecked] = useState(true);
  if (row.kind === 'check') {
    return (
      <span className="relative ml-[3px] block h-[16px] w-[16px]">
        <input id={id} type="checkbox" checked={checked} onChange={() => setChecked(!checked)} className="block h-[16px] w-[16px] appearance-none border border-[#222] bg-white" />
        {checked && (
          <svg viewBox="0 0 16 16" className="pointer-events-none absolute inset-0" fill="none" stroke="#333" strokeWidth="1.500" aria-hidden="true">
            <path d="M3 8l3.500 3.500L13 4.500" />
          </svg>
        )}
      </span>
    );
  }
  if (row.kind === 'button') {
    return <button id={id} type="button" className="ml-px block h-[22px] w-[125px] border-b-2 border-r-2 border-[#aeacb2] bg-[#dfe0e4] leading-[20px]">{row.value}</button>;
  }
  return (
    <input
      id={id}
      defaultValue={row.value}
      readOnly={row.kind === 'readonly'}
      className={`block h-[23px] w-full bg-transparent pb-[2px] leading-[20px] outline-none ${row.kind === 'active' ? 'border border-black px-px' : 'px-[2px]'} ${row.kind === 'readonly' ? 'text-[#7d7d80]' : ''}`}
    />
  );
}

function PropertiesPalette() {
  return (
    <aside className="flex w-[280px] shrink-0 flex-col bg-[#eef1f2] pl-px text-[15px] text-[#161616]">
      <div className="mr-[4px] flex h-[27px] items-center justify-between bg-[#bdcbda] pl-[4px] pr-[5px] text-[14px] leading-[24px]">
        <h2>属性</h2>
        <button type="button" aria-label="关闭">
          <Svg w={11} stroke="#111" strokeWidth="2"><path d="M1 1l9 9M10 1l-9 9" /></Svg>
        </button>
      </div>

      <div className="mr-[5px] mt-[2px] flex min-h-0 flex-1 flex-col border-l-2 border-r border-t-2 border-[#77777b] border-r-[#d5d5da] bg-[#fdfdfd]">
        <div className="flex h-[90px] items-center justify-between border-b border-[#dddbe0] bg-[#f1f2f4] pl-[4px] pr-[3px]">
          <div className="flex h-[82px] w-[82px] border border-[#dad9de] bg-[#ededf0] pl-[16px] pt-[6px]">
            <RevitLogo size={62} from="#8f8f92" to="#b8b8bc" fold="#868689" />
          </div>
          <Caret size={9} color="#99969c" />
        </div>

        <div className="flex h-[29px] items-center gap-[6px] bg-[#f3f4f6]">
          <div className="relative h-[28px] w-[176px] shrink-0">
            <select aria-label="类型选择器" className="h-full w-full appearance-none border border-[#b4b1b8] bg-[#e1e2e6] pl-[4px] leading-[24px]">
              <option>拉伸</option>
            </select>
            <Svg w={10} h={6} className="pointer-events-none absolute right-[5px] top-[12px]" strokeWidth="1.300"><path d="M0 .5l5 5 5-5" /></Svg>
          </div>
          <button type="button" className="flex items-center gap-[5px] whitespace-nowrap pb-[2px] leading-[24px] text-[#a6a3aa]">
            <Svg w={16} stroke="#a6a3aa" strokeWidth="1.300"><path d="M1 2l1-1h5v6H1zM9 4V1h5v3M1 9h6v6H1zM9 6h6v9H9zM11 9h2M11 12h2" /></Svg>
            编辑类型
          </button>
        </div>

        <table className="w-full table-fixed border-collapse leading-[20px]">
          <colgroup>
            <col className="w-[127px]" />
            <col />
            <col className="w-[16px]" />
          </colgroup>
          {groups.map((g) => (
            <tbody key={g.name}>
              <tr className="h-[24px] bg-[#dddce0]">
                <th colSpan={2} scope="rowgroup" className="p-0 pl-[2px] text-left font-normal">{g.name}</th>
                <td className="p-0 align-top">
                  <button type="button" aria-label={`折叠${g.name}`} className="mt-[2px] block">
                    <Svg w={12} h={11} stroke="#111" strokeWidth="1.500"><path d="M3 5l3-3 3 3M3 9l3-3 3 3" /></Svg>
                  </button>
                </td>
              </tr>
              {g.rows.map((r) => (
                <tr key={r.label} className="h-[24px] border-b border-dotted border-[#77777b]">
                  <th scope="row" className={`whitespace-nowrap p-0 pb-[2px] pl-[10px] text-left font-normal ${r.kind === 'readonly' ? 'text-[#7d7d80]' : ''}`}>
                    <label htmlFor={`p-${r.label}`}>{r.label}</label>
                  </th>
                  <td className="border-x border-dotted border-[#77777b] p-0">
                    <PropValue id={`p-${r.label}`} row={r} />
                  </td>
                  <td className="p-0 pl-px">
                    {r.more && <button type="button" aria-label={`关联${r.label}`} className="block h-[21px] w-[13px] border-b-2 border-r-2 border-[#b3b0b6] bg-[#dfe0e4]" />}
                  </td>
                </tr>
              ))}
            </tbody>
          ))}
        </table>
      </div>

      <div className="mr-[5px] flex h-[29px] items-center justify-between border-l-2 border-[#77777b] bg-[#f1f2f4] pb-[5px] pl-[2px] pr-[2px]">
        <a href="#help" className="pb-[3px] leading-[20px] text-[#1067c0] underline">属性帮助</a>
        <button type="button" className="h-[24px] w-[98px] border border-[#bcbcbf] bg-[#cbcbcd] leading-[22px] text-[#8b8b8e]">应用</button>
      </div>
    </aside>
  );
}

/* ---------- drawing area ---------- */

const GREEN = '#a5cfa7';
const GREY = '#a7a7ad';
const PINK = '#dd00f0';

// slash marks at both ends of a dimension line
const ticks = (pts, dir) => pts.map(([x, y]) => (dir === 'h' ? `M${x - 3} ${y + 3}l7-7` : `M${x - 4} ${y - 4}l8 8`)).join('');

function Elevation() {
  return (
    <svg className="absolute inset-0 h-full w-full" fill="none" strokeWidth="1" role="img" aria-label="立面: 外部">
      <g transform="translate(-283 -212)" fontFamily="Liberation Sans, Noto Sans CJK SC, sans-serif" fontSize="22" shapeRendering="crispEdges">
        <g stroke={GREY}>
          <path d="M587.500 277.500H758M785 277.500h203.500M587.500 879.500H758M785 879.500h203.500" />
          <path d="M587.500 277.500V353M587.500 378v501.500M988.500 277.500V566M988.500 591v288.500" />
          <path d="M791 297.500h177.500V566M968.500 591v268.500H791" />
          <path d="M587.500 387.500h20M968.500 599.500h20M791.500 277.500v20M791.500 859.500v20" />
        </g>
        <g stroke={GREEN} strokeDasharray="33 34">
          <path d="M275 277.500h483M811 277.500h777M275 879.500h483M811 879.500h777" />
          <path d="M587.500 182v170M587.500 383v504M788.500 182v276M788.500 517v370M988.500 182v384M988.500 651v236" />
        </g>
        <path
          shapeRendering="auto"
          stroke={GREY}
          d={ticks([[587.5, 387.5], [607.5, 387.5], [968.5, 599.5], [988.5, 599.5]], 'h') + ticks([[791.5, 277.5], [791.5, 297.5], [791.5, 859.5], [791.5, 879.5]], 'v')}
        />
        <g fill="#a2a3a9" fontWeight="300">
          <text x="527" y="373">窗框宽度 = 50</text>
          <text x="909" y="585">窗框宽度 = 50</text>
          <text transform="translate(779 355) rotate(-90)">窗框宽度 = 50</text>
          <text transform="translate(779 937) rotate(-90)">窗框宽度 = 50</text>
        </g>
        <g stroke={PINK}>
          <path d="M686 297.500h-78.500V596M607.500 621v238.500H647M674 859.500h117.500V483M791.500 458V297.500H713" />
          <path d="M686 318.500h-58.500V596M627.500 621v218.500H647M674 839.500h97.500V483M771.500 458V318.500H713" />
        </g>
        <g stroke="#111">
          <path d="M719.500 297v22M713 297.500h9M713 318.500h9M771 491.500h21M771.500 484v11M791.500 484v11" />
          <path d="M607 629.500h21M607.500 629v8M627.500 629v8M680.500 839v21M674 839.500h9M674 859.500h9" />
          <path
            shapeRendering="auto"
            d={ticks([[771.5, 491.5], [791.5, 491.5], [607.5, 629.5], [627.5, 629.5]], 'h') + ticks([[719.5, 297.5], [719.5, 318.5], [680.5, 839.5], [680.5, 859.5]], 'v')}
          />
        </g>
        <g fill="#111">
          <text x="769" y="477">50</text>
          <text x="605" y="615">50</text>
          <text transform="translate(707 320) rotate(-90)">50</text>
          <text transform="translate(668 861) rotate(-90)">50</text>
        </g>
      </g>
    </svg>
  );
}

function NavigationBar() {
  return (
    <div className="absolute right-0 top-[28px] flex h-[118px] w-[35px] flex-col items-center rounded-md border-2 border-[#c9cacd] bg-[#f3f4f5] pt-[3px]">
      <button type="button" aria-label="关闭导航栏" className="mr-0.5 self-end">
        <Svg w={8} stroke="#b5b6ba"><circle cx="4" cy="4" r="3" fill="#ddd" /></Svg>
      </button>
      <button type="button" aria-label="二维控制盘" className="mt-[7px] flex h-[28px]">
        <Svg w={26} h={26} stroke="#b0b3b8">
          <path d="M10 2h9v9a9 9 0 1 1-9-9z" fill="#e9eaec" />
          <circle cx="10" cy="11" r="4.500" fill="#fff" />
          <text x="12" y="23" fontSize="10" fontWeight="700" fontFamily="Liberation Sans, sans-serif" fill="#8ba6d0" stroke="none">2D</text>
        </Svg>
      </button>
      <Caret color="#88898d" className="mt-px" />
      <span className="mt-[3px] h-px w-[26px] bg-[#c3c4c7]" />
      <button type="button" aria-label="缩放" className="mt-[8px]">
        <Svg w={18} stroke="#9a9da2">
          <path d="M1 1h11v11H1z" fill="#b9d6ae" stroke="#90b584" />
          <circle cx="11" cy="11" r="3.500" fill="#fff" />
          <path d="M13.500 13.500 17 17" strokeWidth="2" />
        </Svg>
      </button>
      <Caret color="#88898d" className="mt-[7px]" />
      <button type="button" aria-label="导航栏选项" className="mb-[2px] mr-0.5 mt-auto self-end">
        <Svg w={8} stroke="#b5b6ba"><circle cx="4" cy="4" r="3" fill="#ddd" /></Svg>
      </button>
    </div>
  );
}

const Chevron = ({ d, w = 10, h = 10 }) => <Svg w={w} h={h} strokeWidth="2"><path d={d} /></Svg>;

function ViewControls() {
  return (
    <div className="flex h-[22px] items-center bg-[#f1f2f4] pb-[2px] pl-[32px]">
      <button type="button" className="w-[66px] text-left font-['Liberation_Mono',monospace] text-[14px] leading-[20px] text-[#222]">1 : 10</button>
      <div className="ml-[9px] flex items-center gap-[8px]">
        <Cell label="详细程度"><Svg w={20} h={16}><path d="M1 1h18v14H1z" fill="#fff" /><path d="M1 2h18" /></Svg></Cell>
        <Cell label="视觉样式"><Svg w={20} h={16}><path d="M1 6l5-5h13l-5 5v9H1z" fill="#fff" /><path d="M1 6h13M14 6v9l5-5V1" fill="#c9ccd0" /></Svg></Cell>
        <Cell label="裁剪视图"><Svg w={20} h={16}><path d="M1 6h4V3h11v5M5 6v8M1 11h4M16 12v3" stroke="#2c6aa6" strokeWidth="3" /><path d="M9 7l8 8M17 7l-8 8" stroke="#dd3327" strokeWidth="3" /></Svg></Cell>
        <Cell label="显示裁剪区域"><Svg w={20} h={16}><path d="M1 6h4V3h10v5M5 6v8M1 11h4" stroke="#2c6aa6" strokeWidth="3" /><circle cx="9" cy="11" r="1.500" fill="#dd3327" stroke="#dd3327" /><circle cx="15" cy="7" r="4" fill="#d9edfb" stroke="#6ca0cf" /><path d="M15 11v4" /></Svg></Cell>
        <Cell label="临时隐藏/隔离"><Svg w={20} h={16}><path d="M1 3l2 6M1 3h2M19 6l-2-5-4 1" /><circle cx="6" cy="11" r="3" fill="#fff" /><circle cx="15" cy="8.500" r="4" fill="#fff" /></Svg></Cell>
        <Cell label="临时视图属性"><Svg w={20} h={16}><path d="M1 1v14M19 1v6M1 3h18M1 13h9" /><path d="M11 9h8v6h-8z" fill="#777" /><path d="M13 9V7h4v2" /></Svg></Cell>
        <Cell label="显示约束"><Svg w={20} h={16}><path d="M1 1h18v14H1z" fill="#e4e6e8" /><path d="M1 7h12M1 11h12" strokeWidth="2" /><circle cx="16" cy="6" r="3.500" fill="#d9edfb" stroke="#6ca0cf" /></Svg></Cell>
      </div>
      <div className="ml-[8px] flex h-full min-w-0 flex-1 items-center">
        <Cell label="向左滚动"><Chevron d="M8 1L3 5l5 4" /></Cell>
        <div className="flex h-full flex-1">
          <span className="w-[49%]" />
          <span className="h-[20px] w-[21px] bg-[#cccccf]" />
        </div>
        <Cell label="向右滚动"><Chevron d="M2 1l5 4-5 4" /></Cell>
        <span className="w-[4px]" />
      </div>
    </div>
  );
}

function DrawingArea() {
  return (
    <main className="flex min-w-0 flex-1 border-l-2 border-t-2 border-[#7c7c80] bg-[#f1f2f4]">
      <div className="flex min-w-0 flex-1 flex-col">
        <div className="relative min-h-0 flex-1 overflow-hidden border-r border-[#b4b4b8] bg-[#fdfdfd]">
          <Elevation />
          <div className="absolute right-[2px] top-[8px] flex items-center gap-[6px]">
            <Cell label="最小化视图"><Svg w={12} h={12}><path d="M0 7h12v3H0z" fill="#fff" strokeWidth="1.300" /></Svg></Cell>
            <Cell label="还原视图"><Svg w={12} h={12} strokeWidth="1.400"><path d="M3 3V1h8v8H9M1 3h8v8H1z" /><path d="M4 6h2v2H4z" /></Svg></Cell>
            <Cell label="关闭视图"><Svg w={12} h={12} strokeWidth="1.200"><path d="M1 1h3l2 3 2-3h3L8 6l3 5H8L6 8l-2 3H1l3-5z" fill="#fff" /></Svg></Cell>
          </div>
          <NavigationBar />
        </div>
        <ViewControls />
      </div>
      <div className="flex w-[23px] shrink-0 flex-col items-center pb-[4px] pr-[2px] pt-[5px]">
        <Cell label="向上滚动"><Chevron d="M1 8l4-5 4 5" /></Cell>
        <span className="h-[45%]" />
        <span className="h-[21px] w-[19px] bg-[#cccccf]" />
        <span className="flex-1" />
        <Cell label="向下滚动"><Chevron d="M1 2l4 5 4-5" /></Cell>
        <Svg w={12} className="ml-1.5 mt-[12px] block" stroke="none"><path d="M9 0h3v3H9zM4.500 4.500h3v3h-3zM9 4.500h3v3H9zM0 9h3v3H0zM4.500 9h3v3h-3zM9 9h3v3H9z" fill="#b8b6bb" /></Svg>
      </div>
    </main>
  );
}

/* ---------- project browser ---------- */

const treeIcons = {
  views: <Svg w={20}><path d="M5 1H1v4M15 1h4v4M5 19H1v-4M15 19h4v-4" /><path d="M6 8l2-3h7v8l-2 2H6z" fill="#e7e8ea" /></Svg>,
  sheets: <Svg w={20}><path d="M1 2h13l5 5v11H1z" fill="#e1e3e5" strokeWidth="2" /><path d="M4 6h9v9M4 14h4v-4" stroke="#7a7f86" /></Svg>,
  families: <Svg w={20}><path d="M1 1h10v9H1z" fill="#e1e3e5" /><path d="M14 1h5v17H1v-5h13z" fill="#e1e3e5" /></Svg>,
  groups: <Svg w={20}><path d="M5 1H1v18h4M15 1h4v18h-4" strokeWidth="2" /><path d="M9 8h7v7H9z" fill="#cfd2d5" /><circle cx="9" cy="9" r="4.500" fill="#dfe1e3" /></Svg>,
  links: <Svg w={20} stroke="#a87410" strokeWidth="1.300"><rect x="1" y="6" width="9" height="8" rx="3.500" fill="#f0b92b" /><rect x="10" y="6" width="9" height="8" rx="3.500" fill="#f0b92b" /><path d="M4 10h3M13 10h3M8 10h4" strokeWidth="2" /></Svg>,
};

// guides: v = line passing through, t = branch, l = last branch, s = start, _ = empty
const tree = [
  { g: 's', box: '-', icon: 'views', text: '视图 (全部)' },
  { g: 'vt', box: '-', text: '楼层平面' },
  { g: 'vvl', text: '参照标高' },
  { g: 'vt', box: '-', text: '天花板平面' },
  { g: 'vvl', text: '参照标高' },
  { g: 'vt', box: '+', text: '三维视图' },
  { g: 'vl', box: '-', text: '立面 (立面 1)' },
  { g: 'v_t', text: '内部' },
  { g: 'v_t', text: '右' },
  { g: 'v_t', text: '外部', current: true },
  { g: 'v_l', text: '左' },
  { g: 't', icon: 'sheets', text: '图纸 (全部)' },
  { g: 't', box: '+', icon: 'families', text: '族' },
  { g: 't', box: '+', icon: 'groups', text: '组' },
  { g: 'l', icon: 'links', text: 'Revit 链接' },
];

const guidePaths = { v: 'M6.500 0v22', t: 'M6.500 0v22M6.500 11.500H26', l: 'M6.500 0v11.500H26', s: 'M6.500 22V11.500H26', _: '' };

function Guide({ kind, box, w }) {
  return (
    <svg width={w} height="22" viewBox={`0 0 ${w} 22`} fill="none" className="block shrink-0" aria-hidden="true" shapeRendering="crispEdges">
      <path d={guidePaths[kind]} stroke="#99999d" strokeDasharray="1 1" />
      {box && (
        <>
          <path d="M.5 5.500h12v12H.5z" fill="#f1f2f4" stroke="#97979c" />
          <path d={box === '+' ? 'M3 11.500h7M6.500 8v7' : 'M3 11.500h7'} stroke="#24489c" />
        </>
      )}
    </svg>
  );
}

function TreeRow({ node }) {
  const kinds = node.g.split('');
  return (
    <li className="flex h-[22px] items-center">
      {kinds.map((k, i) => {
        const last = i === kinds.length - 1;
        const w = node.icon ? 22 : 26;
        return last && node.box ? (
          <button type="button" key={i} aria-label={`展开或折叠 ${node.text}`}><Guide kind={k} box={node.box} w={w} /></button>
        ) : (
          <Guide key={i} kind={k} w={w} />
        );
      })}
      {node.icon && treeIcons[node.icon]}
      <a href="#view" className={`whitespace-nowrap pb-[2px] leading-[20px] ${node.icon ? 'ml-[6px]' : 'px-[2px]'} ${node.current ? 'bg-[#dfe3e8] font-bold' : ''}`}>{node.text}</a>
    </li>
  );
}

function ProjectBrowser() {
  return (
    <aside className="flex w-[218px] shrink-0 flex-col bg-[#f1f2f4] pl-[4px] text-[15px] text-[#161616]">
      <h2 className="h-[27px] bg-[#bdcbda] pl-[4px] text-[14px] leading-[28px]">项目浏览器 - 族1</h2>
      <div className="mt-[2px] min-h-0 flex-1 border-l-2 border-t-2 border-[#77777b] bg-[#fdfdfd] pl-[4px]">
        <ul>
          {tree.map((n, i) => <TreeRow key={i} node={n} />)}
        </ul>
      </div>
    </aside>
  );
}

export default function App() {
  return (
    <div className="flex h-screen flex-col overflow-hidden border border-b-2 border-black border-b-[#88868c] bg-[#d5d5d5] font-['Open_Sans','Noto_Sans_CJK_SC',sans-serif]">
      <TitleBar />
      <Tabs />
      <Ribbon />
      <div className="h-[30px] shrink-0 bg-[#d5eae7] pl-[13px] text-[15px] leading-[34px] text-[#a0a6a6] [text-shadow:1px_1px_0_#ffffff]">修改 | 创建拉伸</div>
      <div className="flex min-h-0 flex-1">
        <PropertiesPalette />
        <DrawingArea />
        <ProjectBrowser />
      </div>
    </div>
  );
}
